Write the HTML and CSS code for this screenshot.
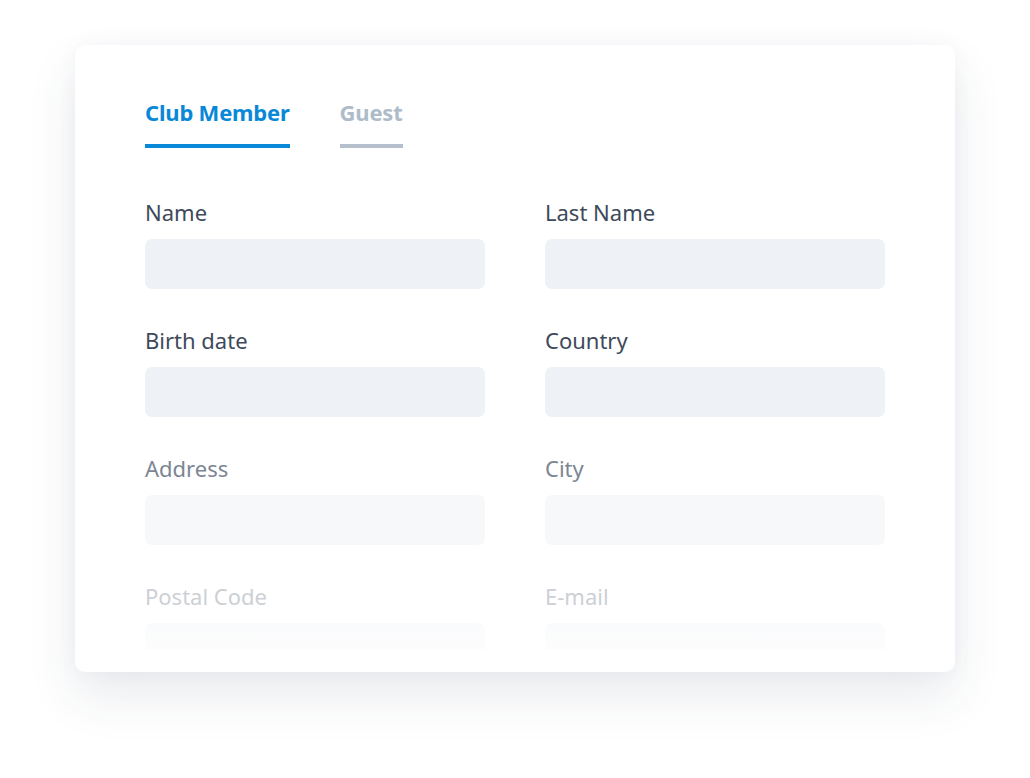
FILE: index.html
```html
<!DOCTYPE html>
<html lang="en">
<head>
<meta charset="utf-8">
<title>Registration form</title>
<link rel="stylesheet" href="styles.css">
</head>
<body>
<div class="card">
  <nav class="tabs">
    <div class="tab active">Club Member</div>
    <div class="tab">Guest</div>
  </nav>
  <form class="form">
    <div class="row">
      <label class="field"><span class="label">Name</span><span class="input"></span></label>
      <label class="field"><span class="label">Last Name</span><span class="input"></span></label>
    </div>
    <div class="row">
      <label class="field"><span class="label">Birth date</span><span class="input"></span></label>
      <label class="field"><span class="label">Country</span><span class="input"></span></label>
    </div>
    <div class="row fade-1">
      <label class="field"><span class="label">Address</span><span class="input"></span></label>
      <label class="field"><span class="label">City</span><span class="input"></span></label>
    </div>
    <div class="row fade-2">
      <label class="field"><span class="label">Postal Code</span><span class="input"></span></label>
      <label class="field"><span class="label">E-mail</span><span class="input"></span></label>
    </div>
  </form>
</div>
</body>
</html>
```

FILE: styles.css
```css
* { box-sizing: border-box; }
html, body { margin: 0; padding: 0; background: #ffffff; }
body {
  width: 1030px;
  height: 778px;
  overflow: hidden;
  font-family: "Noto Sans", "Open Sans", sans-serif;
  padding: 45px 0 0 75px;
}
.card {
  width: 880px;
  height: 627px;
  background: #ffffff;
  border-radius: 10px;
  box-shadow: 0 24px 50px rgba(40, 60, 90, 0.10), 0 0 22px rgba(40, 60, 90, 0.035);
  padding: 52px 70px 0 70px;
  overflow: hidden;
}
.tabs {
  display: flex;
  gap: 50px;
}
.tab {
  font-size: 22px;
  font-weight: 700;
  line-height: 30px;
  letter-spacing: -0.2px;
  color: #aebbc8;
  padding-bottom: 17px;
  border-bottom: 4px solid #b5c0cc;
}
.tab.active {
  color: #0a88d8;
  border-bottom-color: #0a88d8;
}
.form {
  margin-top: 49px;
  display: flex;
  flex-direction: column;
  gap: 36px;
}
.row {
  display: grid;
  grid-template-columns: 340px 340px;
  column-gap: 60px;
}
.field { display: flex; flex-direction: column; }
.label {
  font-size: 22px;
  line-height: 30px;
  color: #3e4a5a;
  margin-bottom: 12px;
}
.input {
  display: block;
  height: 50px;
  border-radius: 7px;
  background: #eef1f5;
}
.fade-1 .label { color: #7c8692; }
.fade-1 .input { background: #f6f8fa; }
.fade-2 .label { color: #ccd0d5; }
.fade-2 .input {
  height: 27px;
  border-radius: 7px 7px 0 0;
  background: linear-gradient(to bottom, #fafbfc, #fdfdfe);
}
```
